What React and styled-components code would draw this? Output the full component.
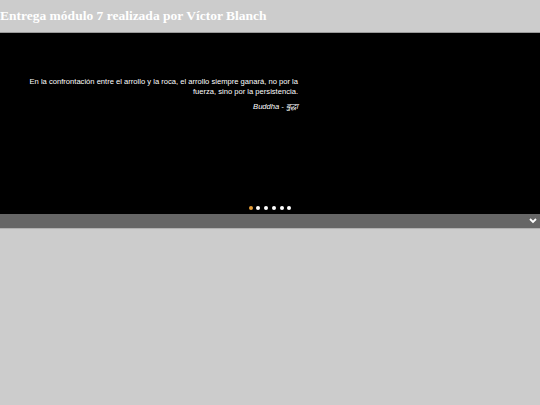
import styled, { createGlobalStyle } from "styled-components";

const GlobalStyle = createGlobalStyle`
    body {
        margin: 0;
        background: #cccccc;
    }
`

const quotes = [
    {
        text: "En la confrontación entre el arrollo y la roca, el arrollo siempre ganará, no por la fuerza, sino por la persistencia.",
        author: "Buddha - बुद्धा",
    },
]

const App = () => {
    const active = 0
    return (
        <>
            <GlobalStyle />
            <Header>
                <Title>Entrega módulo 7 realizada por Víctor Blanch</Title>
            </Header>
            <Slider>
                <Quote>
                    <QuoteText>{quotes[0].text}</QuoteText>
                    <Author>{quotes[0].author}</Author>
                </Quote>
                <Dots>
                    {[0, 1, 2, 3, 4, 5].map((i) => (
                        <Dot key={i} $active={i === active} />
                    ))}
                </Dots>
            </Slider>
            <NavBar>
                <Toggle>
                    <svg width="8" height="6" viewBox="0 0 8 6">
                        <path d="M1 1 L4 4 L7 1" fill="none" stroke="#fff" strokeWidth="1.8" />
                    </svg>
                </Toggle>
            </NavBar>
        </>
    )
}

const Header = styled.header`
    height: 32px;
    border-bottom: 1px solid #9a9a9a;
`

const Title = styled.h1`
    margin: 0;
    font-family: "Liberation Serif", serif;
    font-size: 13.5px;
    font-weight: 700;
    color: #fff;
    line-height: 32px;
`

const Slider = styled.section`
    height: 181px;
    background: #000;
    display: flex;
    flex-direction: column;
    justify-content: space-between;
`

const Quote = styled.div`
    width: 270px;
    margin: 44px 0 0 28px;
    font-family: "Liberation Sans", Arial, sans-serif;
    font-size: 7.6px;
    color: #fff;
    text-align: right;
`

const QuoteText = styled.p`
    margin: 0;
    line-height: 9.5px;
`

const Author = styled.p`
    margin: 6px 0 0;
    font-style: italic;
    line-height: 10px;
`

const Dots = styled.div`
    display: flex;
    justify-content: center;
    gap: 3.7px;
    margin-bottom: 4px;
`

const Dot = styled.span`
    width: 4px;
    height: 4px;
    border-radius: 50%;
    background: ${(p) => (p.$active ? "#e8a03a" : "#fff")};
`

const NavBar = styled.nav`
    height: 14px;
    background: #666;
    border-bottom: 1px solid #b0b0b0;
    display: flex;
    justify-content: flex-end;
    align-items: center;
`

const Toggle = styled.span`
    display: flex;
    margin-right: 3px;
`

export default App
